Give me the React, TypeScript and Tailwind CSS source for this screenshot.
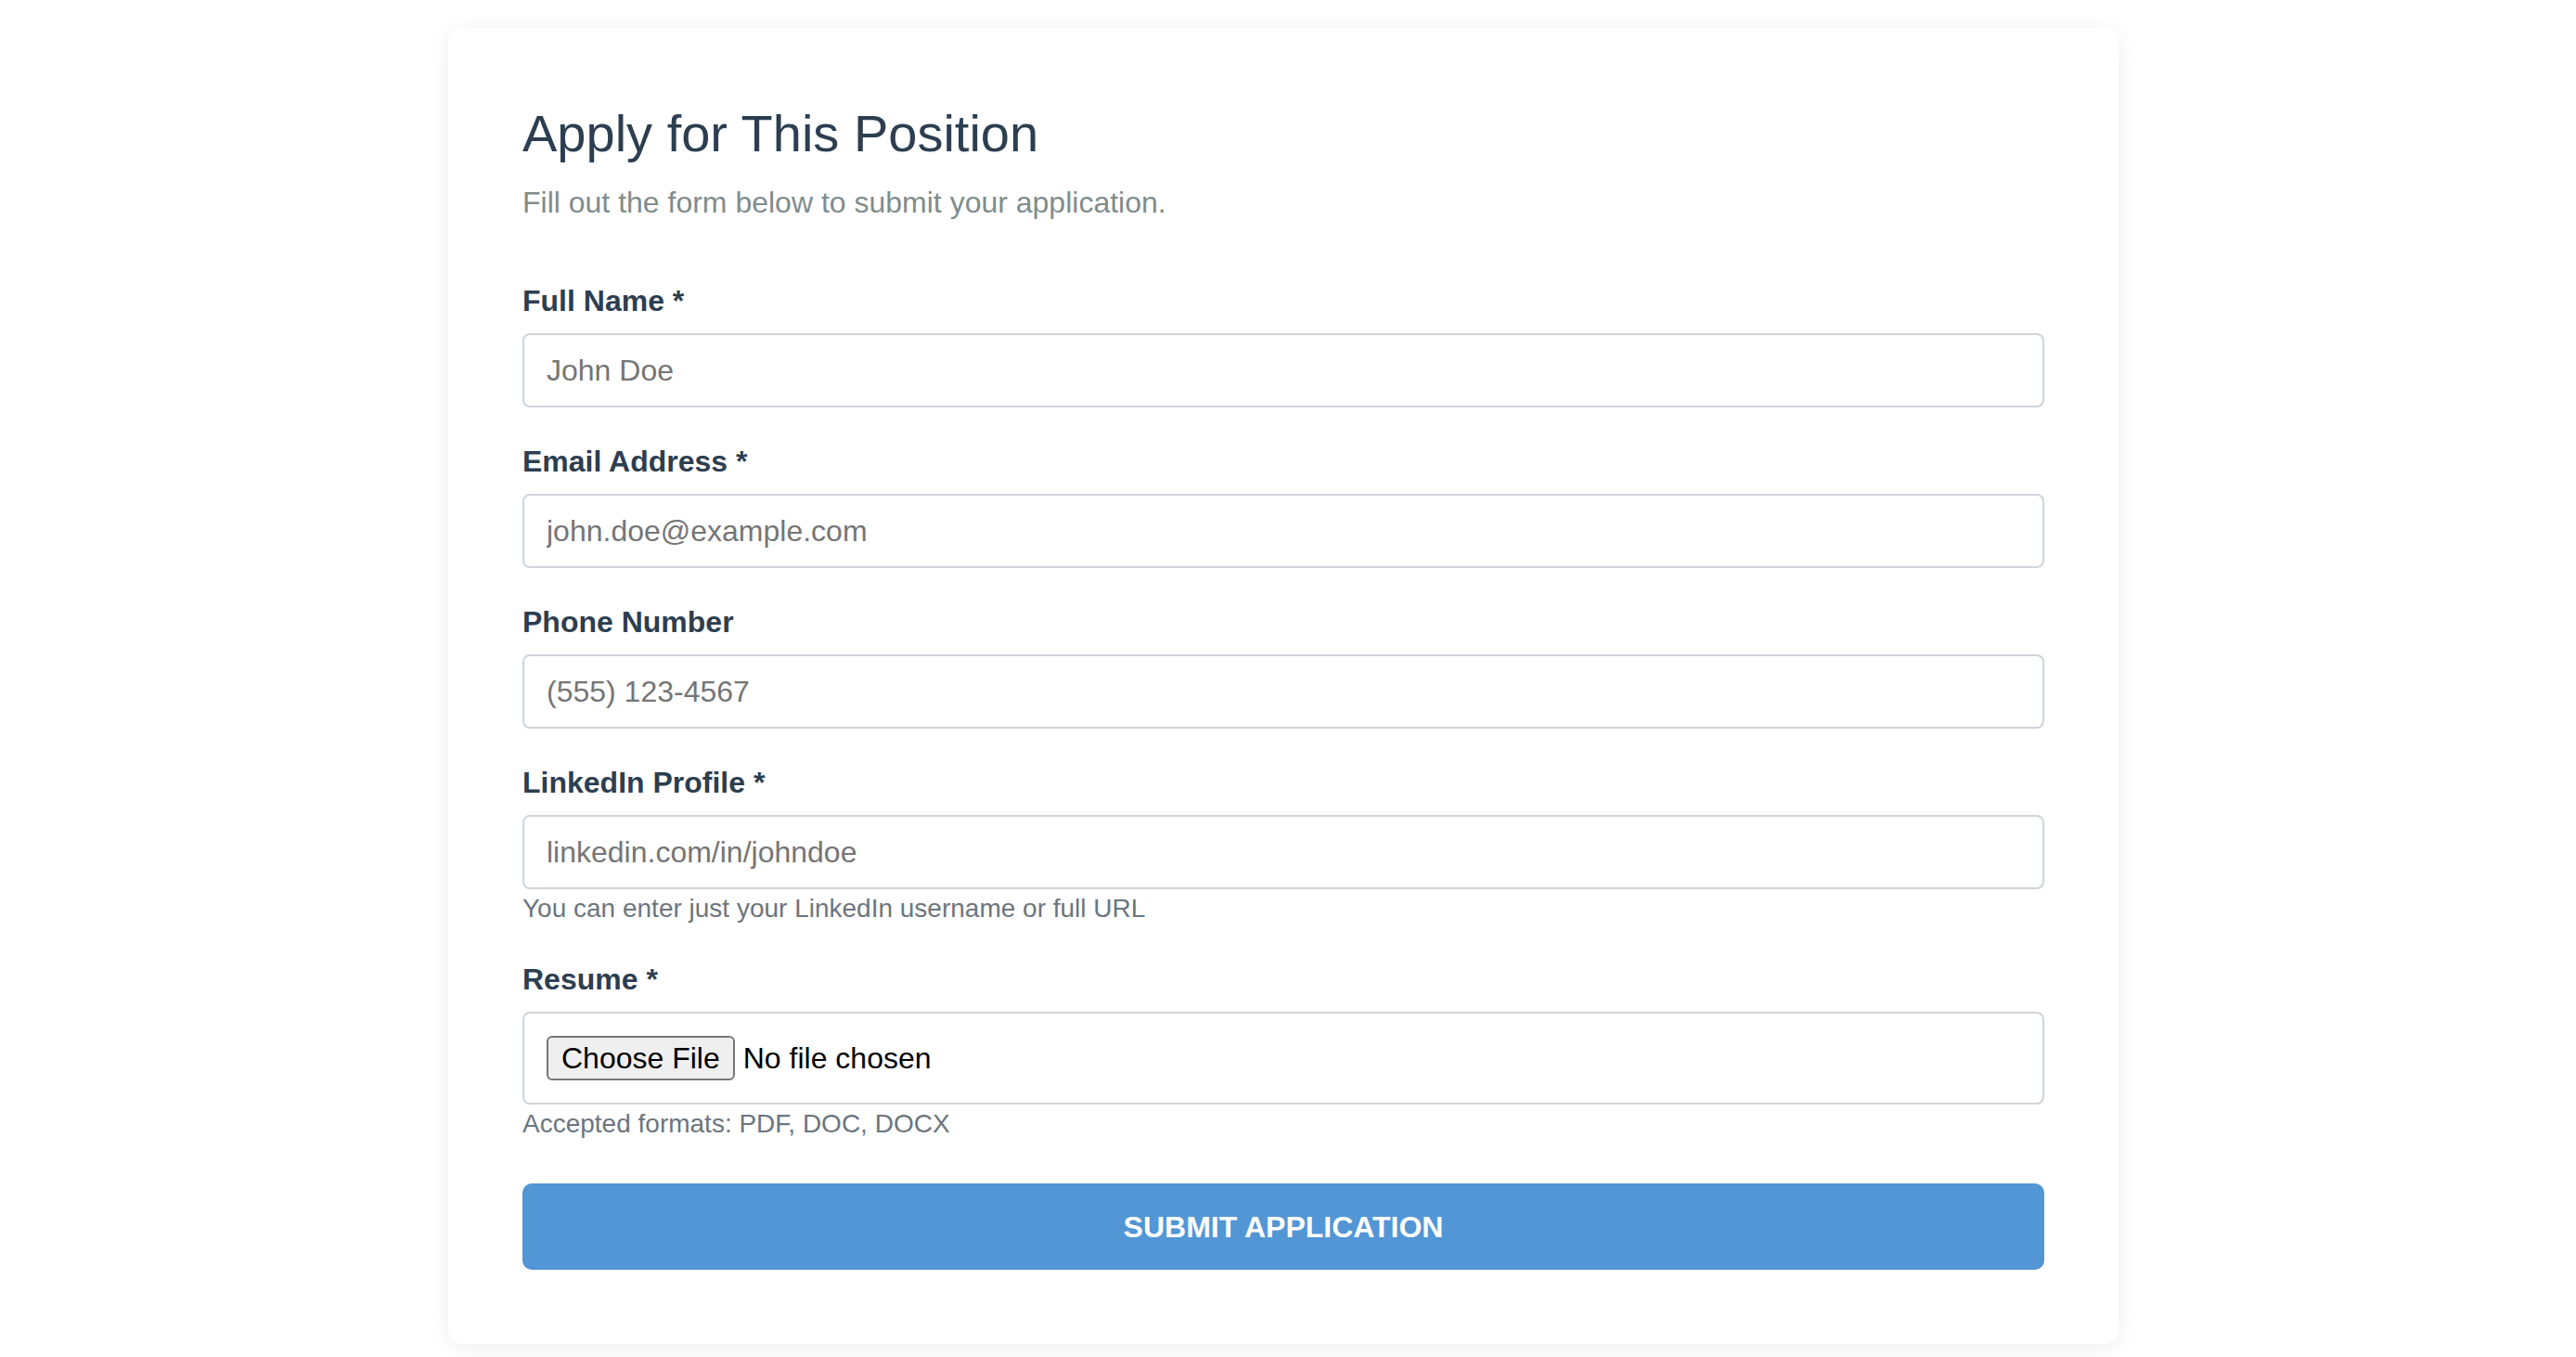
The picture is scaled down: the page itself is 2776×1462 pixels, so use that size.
import React from 'react';

const fields = [
  { label: 'Full Name *', placeholder: 'John Doe', type: 'text' },
  { label: 'Email Address *', placeholder: 'john.doe@example.com', type: 'email' },
  { label: 'Phone Number', placeholder: '(555) 123-4567', type: 'tel' },
];

const Label = ({ children }: { children: React.ReactNode }) => (
  <label className="block text-[32px] font-bold leading-[48px] text-[#2c3e50] mb-[11px]">{children}</label>
);

const Hint = ({ children }: { children: React.ReactNode }) => (
  <p className="mt-[4px] text-[28px] leading-[34px] text-[#6c757d]">{children}</p>
);

export default function App() {
  return (
    <div
      className="min-h-screen bg-white flex justify-center pt-[30px] pb-[15px] pr-[10px]"
      style={{ fontFamily: '"Liberation Sans", Arial, Helvetica, sans-serif' }}
    >
      <div className="w-[1800px] bg-white rounded-2xl shadow-[0_4px_24px_rgba(0,0,0,0.07)] p-[80px]">
        <h2 className="text-[56px] leading-[67px] font-normal text-[#2c3e50] mb-[17px]">Apply for This Position</h2>
        <p className="text-[32px] leading-[48px] text-[#7f8c8d] mb-[58px]">
          Fill out the form below to submit your application.
        </p>

        <form onSubmit={(e) => e.preventDefault()}>
          {fields.map((f) => (
            <div key={f.label} className="mb-[34px]">
              <Label>{f.label}</Label>
              <input
                type={f.type}
                placeholder={f.placeholder}
                className="block w-full h-[80px] px-[24px] border-2 border-[#ced4da] rounded-[8px] text-[32px] text-[#2c3e50] placeholder:text-[#757575] bg-white outline-none"
              />
            </div>
          ))}

          <div className="mb-[35px]">
            <Label>LinkedIn Profile *</Label>
            <input
              type="text"
              placeholder="linkedin.com/in/johndoe"
              className="block w-full h-[80px] px-[24px] border-2 border-[#ced4da] rounded-[8px] text-[32px] text-[#2c3e50] placeholder:text-[#757575] bg-white outline-none"
            />
            <Hint>You can enter just your LinkedIn username or full URL</Hint>
          </div>

          <div className="mb-[47px]">
            <Label>Resume *</Label>
            <div className="flex items-center h-[100px] px-[24px] border-2 border-[#ced4da] rounded-[8px] bg-white">
              <span className="flex items-center h-[48px] px-[14px] border-2 border-[#767676] rounded-[6px] bg-[#efefef] text-[32px] text-black">
                Choose File
              </span>
              <span className="ml-[9px] text-[32px] text-black">No file chosen</span>
            </div>
            <Hint>Accepted formats: PDF, DOC, DOCX</Hint>
          </div>

          <button
            type="submit"
            className="w-full h-[93px] rounded-[10px] bg-[#5296d5] text-white text-[32px] font-bold uppercase"
          >
            Submit Application
          </button>
        </form>
      </div>
    </div>
  );
}
